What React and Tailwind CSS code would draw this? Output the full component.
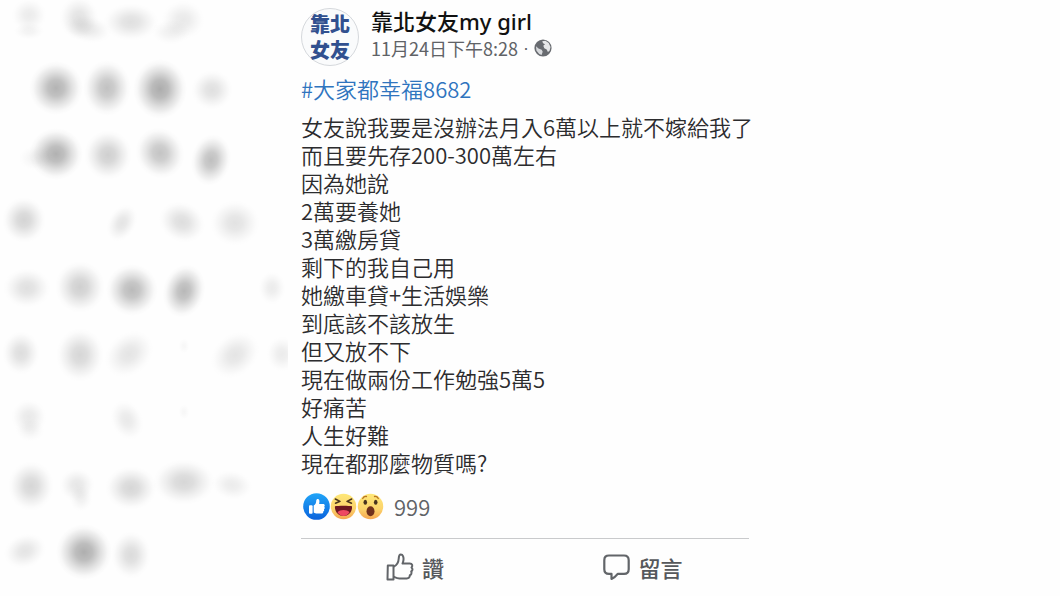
const CJK = "font-['Noto_Sans_CJK_TC','Noto_Sans',sans-serif]";

const lines = [
  "女友說我要是沒辦法月入6萬以上就不嫁給我了",
  "而且要先存200-300萬左右",
  "因為她說",
  "2萬要養她",
  "3萬繳房貸",
  "剩下的我自己用",
  "她繳車貸+生活娛樂",
  "到底該不該放生",
  "但又放不下",
  "現在做兩份工作勉強5萬5",
  "好痛苦",
  "人生好難",
  "現在都那麼物質嗎?",
];

// cx, cy, rx, ry, opacity, rotation
const smudges = [
  [29, 15, 18, 17, 0.08, 0], [29, 31, 16, 9, 0.05, 0], [79, 18, 20, 22, 0.12, 0], [88, 29, 24, 14, 0.09, 10],
  [131, 22, 28, 19, 0.13, 0], [183, 20, 22, 20, 0.09, 0], [171, 32, 20, 13, 0.06, 0],
  [56, 88, 27, 27, 0.32, 0], [107, 88, 24, 28, 0.26, 0], [160, 89, 27, 30, 0.35, 0], [212, 90, 21, 20, 0.13, 0],
  [56, 154, 27, 26, 0.33, 0], [36, 158, 18, 13, 0.05, 0], [108, 155, 24, 25, 0.2, 0], [160, 153, 24, 26, 0.25, -30], [211, 160, 20, 26, 0.27, 12],
  [24, 220, 22, 23, 0.18, 0], [122, 223, 14, 20, 0.11, 30], [182, 222, 24, 20, 0.14, 25], [235, 223, 25, 23, 0.12, 0],
  [27, 288, 24, 20, 0.13, 0], [80, 287, 25, 26, 0.2, 0], [132, 290, 26, 26, 0.29, 0], [184, 291, 21, 27, 0.3, 15], [272, 288, 14, 17, 0.08, 0],
  [21, 353, 19, 22, 0.14, 0], [80, 355, 24, 27, 0.17, 0], [129, 354, 27, 21, 0.11, -40], [184, 346, 6, 8, 0.03, 0], [235, 355, 27, 21, 0.11, -40], [282, 354, 16, 18, 0.08, 0],
  [29, 417, 18, 18, 0.09, 0], [30, 430, 15, 12, 0.05, 0], [127, 420, 16, 21, 0.09, -25], [184, 412, 6, 8, 0.03, 0],
  [31, 486, 23, 25, 0.17, 0], [77, 485, 18, 17, 0.1, 0], [81, 498, 12, 14, 0.06, 0], [131, 488, 26, 22, 0.17, 0], [184, 482, 31, 23, 0.17, 0], [232, 485, 21, 15, 0.08, 10],
  [25, 551, 22, 17, 0.11, -20], [84, 552, 28, 28, 0.34, 0], [131, 555, 20, 24, 0.15, 0],
];

function Smudges() {
  return (
    <svg viewBox="0 0 288 590" className="block w-full" aria-hidden="true">
      <defs>
        <radialGradient id="smudge">
          <stop offset="0" stopColor="#000" stopOpacity="0.92" />
          <stop offset="0.3" stopColor="#000" stopOpacity="0.75" />
          <stop offset="0.6" stopColor="#000" stopOpacity="0.35" />
          <stop offset="0.85" stopColor="#000" stopOpacity="0.07" />
          <stop offset="1" stopColor="#000" stopOpacity="0" />
        </radialGradient>
      </defs>
      {smudges.map(([cx, cy, rx, ry, o, r], i) => (
        <ellipse key={i} cx={cx} cy={cy} rx={rx} ry={ry} opacity={o} fill="url(#smudge)" transform={`rotate(${r} ${cx} ${cy})`} />
      ))}
    </svg>
  );
}

function Avatar() {
  return (
    <div className="grid size-[58px] shrink-0 place-content-center rounded-full border border-[#d5d8dc] bg-[#fafbfc] text-center text-xl leading-[26px] font-black text-[#31508f]">
      <span>靠北</span>
      <span>女友</span>
    </div>
  );
}

function Globe() {
  return (
    <svg viewBox="0 0 18 18" className="size-[18px]" role="img" aria-label="公開">
      <circle cx="9" cy="9" r="8.6" fill="#686b70" />
      <path d="M8.2 2.2 11.4 1.7 14.7 4 16.5 8 15.6 11.7 13.9 13 12.7 10.4 10.3 9.2 9.3 6.7 11 5.2 9.1 4.3Z" fill="#e6e7e9" />
      <path d="M2 7.2 4.5 9.4 7.7 10.7 8.7 12.7 7.6 15.9 5.2 15 2.4 11.6Z" fill="#d7d9dc" />
    </svg>
  );
}

function LikeBadge() {
  return (
    <svg viewBox="0 0 27 27" className="size-[27px]" role="img" aria-label="讚">
      <defs>
        <linearGradient id="blue" x2="0" y2="1">
          <stop stopColor="#20a5f8" />
          <stop offset="1" stopColor="#0b63dc" />
        </linearGradient>
      </defs>
      <circle cx="13.5" cy="13.5" r="13.3" fill="url(#blue)" />
      <rect x="6" y="12.3" width="3.6" height="8.4" rx="0.9" fill="#fff" />
      <path d="M10.7 12.6c1.7-1 2.4-2.4 2.5-4.5.1-1.7 1-2.2 1.8-2 1.4.3 1.8 2.1 1.1 4.9h4c1.7 0 2.2 1.8 1 2.7 1 .8.8 2-.2 2.5.6.9.3 1.9-.7 2.3.2 1.3-.6 2-1.9 2h-4.1c-1.5 0-2.2-.4-3.5-1z" fill="#fff" />
    </svg>
  );
}

function HahaBadge() {
  return (
    <svg viewBox="0 0 27 27" className="size-[27px]" role="img" aria-label="哈">
      <defs>
        <linearGradient id="face" x2="0" y2="1">
          <stop stopColor="#fee778" />
          <stop offset="0.6" stopColor="#fcd36b" />
          <stop offset="1" stopColor="#f5a750" />
        </linearGradient>
      </defs>
      <circle cx="13.5" cy="13.5" r="12.7" fill="url(#face)" />
      <path d="M5.3 6 10 8.3 5.5 10.3M21.7 6 17 8.3 21.5 10.3" fill="none" stroke="#4b351d" strokeWidth="1.5" strokeLinecap="round" strokeLinejoin="round" />
      <path d="M5 13.3c2.8-.7 14.2-.7 17 0 .5 5.7-3.7 9.7-8.5 9.7S4.5 19 5 13.3Z" fill="#6c1720" />
      <path d="M7.5 19.3c2.5-3 9.5-3 12 0-1.4 2.3-3.600 3.700-6 3.700s-4.600-1.400-6-3.700Z" fill="#ee4962" />
    </svg>
  );
}

function WowBadge() {
  return (
    <svg viewBox="0 0 27 27" className="size-[27px]" role="img" aria-label="哇">
      <circle cx="13.5" cy="13.5" r="12.7" fill="url(#face)" />
      <path d="M5.7 5.500c.8-1.600 2.200-2.300 3.800-2M17.500 3.500c1.600-.3 3 .4 3.800 2" fill="none" stroke="#b87524" strokeWidth="1.3" strokeLinecap="round" />
      <ellipse cx="8.3" cy="9.3" rx="1.8" ry="2.5" fill="#49331f" />
      <ellipse cx="18.7" cy="9.3" rx="1.8" ry="2.5" fill="#49331f" />
      <ellipse cx="13.5" cy="18.3" rx="4" ry="5" fill="#70301b" />
    </svg>
  );
}

function ThumbIcon() {
  return (
    <svg viewBox="0 0 28 28" className="size-7" fill="none" stroke="#626569" strokeWidth="2" strokeLinejoin="round" aria-hidden="true">
      <path d="M1.8 12.5h5.7v14H1.5z" />
      <path d="M7.7 13.7c3.300-1.600 4.800-4.200 5-8 .1-2.600.5-4.200 2.100-4.200 2.300 0 3 3 2.700 5.300-.2 1.500-.6 2.700-1 3.800h7.300c2.500 0 3.200 2.200 1.700 3.800 1.500 1.400 1.200 3.300-.3 4.100.8 1.700 0 3.200-1.400 3.700.2 2-1 3.200-3.100 3.200h-7.200c-2.500 0-3.800-.8-5.800-1.700" />
    </svg>
  );
}

function CommentIcon() {
  return (
    <svg viewBox="0 0 27 27" className="size-[27px]" fill="none" stroke="#626569" strokeWidth="2.2" strokeLinejoin="round" aria-hidden="true">
      <path d="M6 1.500h15c3.200 0 4.700 1.500 4.700 4.700v9c0 3.200-1.500 4.700-4.700 4.700h-6.300c-1.600 2.200-3.500 3.800-6.200 5V19.900H6c-3.200 0-4.700-1.500-4.700-4.700v-9C1.300 3 2.800 1.500 6 1.500Z" />
    </svg>
  );
}

export default function App() {
  return (
    <main lang="zh-Hant" className={`grid min-h-screen grid-cols-[288px_minmax(0,448px)] content-start gap-[13px] bg-[#fefefe] text-[#2c2c2e] ${CJK}`}>
      <Smudges />
      <article className="pt-2">
        <header className="flex items-start gap-3">
          <Avatar />
          <div>
            <h1 className="font-['Noto_Sans','Noto_Sans_CJK_TC',sans-serif] text-[22px] leading-[26px] font-medium text-[#111]">靠北女友my girl</h1>
            <p className="flex items-center text-lg leading-7 text-[#606266]">
              <time>11月24日下午8:28</time>
              <span className="px-[5px] font-['Liberation_Sans',sans-serif]">·</span>
              <Globe />
            </p>
          </div>
        </header>
        <p className="mt-2 text-[22px] leading-7 font-[350]">
          <a href="#post-8682" className="text-[#2f74be]">#大家都幸福8682</a>
        </p>
        <div className="mt-[10px] text-[22px] leading-7 font-[350] whitespace-nowrap">
          {lines.map((line) => (
            <p key={line}>{line}</p>
          ))}
        </div>
        <div className="mt-4 flex h-7 items-center pl-[2px] text-[22px] leading-7 text-[#606266]">
          <LikeBadge />
          <HahaBadge />
          <WowBadge />
          <span className="pl-[10px] font-[350]">999</span>
        </div>
        <footer className="mt-[18px] grid grid-cols-2 gap-4 border-t border-[#c9cacc] pt-[14px] pb-3 pl-2 text-[22px] leading-7 font-medium text-[#56585c]">
          <button type="button" className="flex items-center justify-center gap-2">
            <ThumbIcon />
            讚
          </button>
          <button type="button" className="flex items-center justify-center gap-2">
            <CommentIcon />
            留言
          </button>
        </footer>
      </article>
    </main>
  );
}
